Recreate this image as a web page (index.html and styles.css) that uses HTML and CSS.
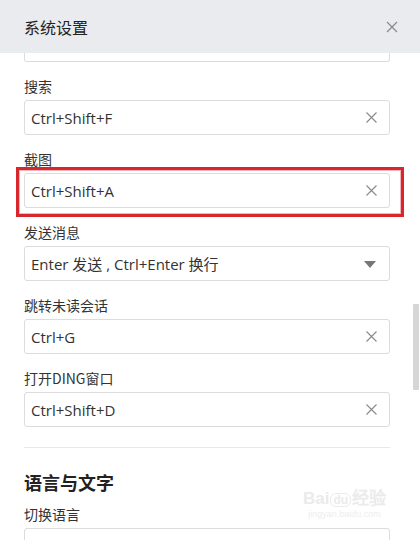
FILE: index.html
```html
<!DOCTYPE html>
<html lang="zh-CN">
<head>
<meta charset="utf-8">
<title>系统设置</title>
<link rel="stylesheet" href="styles.css">
</head>
<body>
<div class="dialog">
  <header class="header">
    <h1 class="title">系统设置</h1>
    <button class="close" aria-label="关闭">
      <svg width="12" height="12" viewBox="0 0 12 12"><path d="M1 1L11 11M11 1L1 11" stroke="#8a8a8a" stroke-width="1.3" fill="none"/></svg>
    </button>
  </header>
  <div class="body">
    <div class="content">
      <div class="input cut"></div>

      <div class="field">
        <div class="label">搜索</div>
        <div class="input"><span class="value">Ctrl+Shift+F</span><svg class="clear" width="11" height="11" viewBox="0 0 11 11"><path d="M0.5 0.5L10.5 10.5M10.5 0.5L0.5 10.5" stroke="#8c8c8c" stroke-width="1.2" fill="none"/></svg></div>
      </div>

      <div class="field">
        <div class="label">截图</div>
        <div class="input marked"><span class="value">Ctrl+Shift+A</span><svg class="clear" width="11" height="11" viewBox="0 0 11 11"><path d="M0.5 0.5L10.5 10.5M10.5 0.5L0.5 10.5" stroke="#8c8c8c" stroke-width="1.2" fill="none"/></svg></div>
      </div>

      <div class="field">
        <div class="label">发送消息</div>
        <div class="input select"><span class="value">Enter 发送 , Ctrl+Enter 换行</span><svg class="arrow" width="12" height="7" viewBox="0 0 12 7"><path d="M0 0H12L6 7Z" fill="#777"/></svg></div>
      </div>

      <div class="field">
        <div class="label">跳转未读会话</div>
        <div class="input"><span class="value">Ctrl+G</span><svg class="clear" width="11" height="11" viewBox="0 0 11 11"><path d="M0.5 0.5L10.5 10.5M10.5 0.5L0.5 10.5" stroke="#8c8c8c" stroke-width="1.2" fill="none"/></svg></div>
      </div>

      <div class="field">
        <div class="label">打开DING窗口</div>
        <div class="input"><span class="value">Ctrl+Shift+D</span><svg class="clear" width="11" height="11" viewBox="0 0 11 11"><path d="M0.5 0.5L10.5 10.5M10.5 0.5L0.5 10.5" stroke="#8c8c8c" stroke-width="1.2" fill="none"/></svg></div>
      </div>

      <hr class="divider">

      <h2 class="section">语言与文字</h2>
      <div class="field">
        <div class="label">切换语言</div>
        <div class="input"></div>
      </div>
    </div>
    <div class="scrollbar"></div>
    <div class="watermark"><span class="wm-big">Bai<span class="wm-du">du</span>经验</span><span class="wm-small">jingyan.baidu.com</span></div>
  </div>
</div>
</body>
</html>
```

FILE: styles.css
```css
* { box-sizing: border-box; }
html, body { margin: 0; padding: 0; }
body {
  width: 420px;
  height: 540px;
  overflow: hidden;
  background: #fff;
  font-family: "Open Sans", "Noto Sans CJK SC", sans-serif;
  color: #333;
}
.dialog { width: 420px; height: 540px; display: flex; flex-direction: column; }
.header {
  height: 53px;
  flex: none;
  background: #e9ebef;
  display: flex;
  align-items: center;
  justify-content: space-between;
  padding: 0 22px 0 24px;
}
.title {
  margin: 0;
  font-family: "Noto Sans CJK SC", sans-serif;
  font-size: 16px;
  font-weight: 400;
  color: #222;
  line-height: 22px;
}
.close {
  border: 0;
  background: none;
  padding: 0;
  width: 12px;
  height: 12px;
  display: flex;
}
.body { flex: 1; position: relative; overflow: hidden; }
.content { padding: 0 30px 0 24px; }
.input {
  height: 35px;
  border: 1px solid #dcdcdc;
  border-radius: 3px;
  display: flex;
  align-items: center;
  justify-content: space-between;
  padding: 0 10px 0 6px;
  position: relative;
  background: #fff;
}
.input.cut {
  height: 9px;
  border-top: 0;
  border-radius: 0 0 3px 3px;
}
.value {
  font-size: 15px;
  color: #333;
  white-space: nowrap;
}
.clear { flex: none; margin-right: 2px; }
.arrow { flex: none; margin-right: 3px; margin-top: 1px; }
.field { margin-top: 13px; }
.label {
  font-family: "Noto Sans CJK SC", sans-serif;
  font-size: 14px;
  line-height: 22px;
  color: #333;
  margin-bottom: 3px;
}
.marked::after {
  content: "";
  position: absolute;
  left: -9px;
  right: -15px;
  top: -7px;
  bottom: -10px;
  border: 3px solid #d7262c;
  box-shadow: inset 0 0 0 1px #f3b5b7;
  pointer-events: none;
}
.divider {
  border: 0;
  border-top: 1px solid #e8e8e8;
  margin: 20px 0 0;
}
.section {
  margin: 20px 0 0;
  font-family: "Noto Sans CJK SC", sans-serif;
  font-size: 18px;
  font-weight: 700;
  line-height: 28px;
  color: #222;
}
.section + .field { margin-top: 7px; }
.scrollbar {
  position: absolute;
  right: 1px;
  top: 251px;
  width: 6px;
  height: 86px;
  background: #d6d6d6;
  border-radius: 1px;
}
.watermark {
  position: absolute;
  left: 303px;
  top: 437px;
  display: flex;
  flex-direction: column;
  align-items: center;
  pointer-events: none;
}
.wm-big {
  font-family: "Liberation Sans", sans-serif;
  font-size: 17px;
  font-weight: 700;
  line-height: 18px;
  color: #ebebeb;
}
.wm-du {
  display: inline-block;
  border: 1px solid #ebebeb;
  border-radius: 6px;
  font-size: 12px;
  padding: 0 2px;
  margin: 0 1px;
  line-height: 12px;
}
.wm-small {
  font-family: "Liberation Sans", sans-serif;
  font-size: 9px;
  line-height: 12px;
  color: #eeeeee;
}
```
